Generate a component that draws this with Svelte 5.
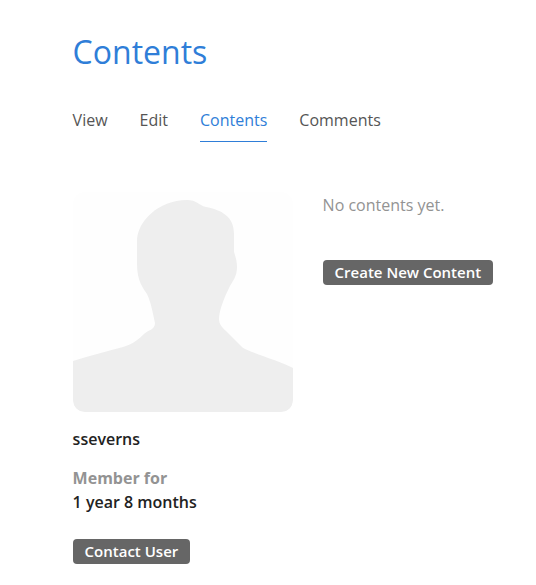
<script>
  let tabs = ['View', 'Edit', 'Contents', 'Comments']
  let active = 'Contents'
</script>

<main>
  <h1>Contents</h1>

  <nav>
    {#each tabs as tab}
      <a href="#{tab}" class:active={tab === active}>{tab}</a>
    {/each}
  </nav>

  <div class="columns">
    <aside>
      <svg class="avatar" viewBox="0 0 220 220" role="img" aria-label="Avatar">
        <path
          fill="#eeeeee"
          d="M0 169 C16 164 34 159 50 155 C60 152 66 147 71 142 C75 138 82 138 82 131 C80 122 78 110 74 102 C70 96 64 89 64 72 L64 49 C64 30 85 8 114 8 C124 8 125 13 133 15 C148 18 161 24 161 42 L161 60 C163 66 164 70 164 75 C164 85 159 90 157 94 C152 104 146 118 146 127 C146 133 150 136 154 140 L169 155 C175 160 205 168 220 176 L220 208 Q220 220 208 220 L12 220 Q0 220 0 208 Z"
        />
      </svg>
      <p class="name">sseverns</p>
      <p class="label">Member for</p>
      <p class="value">1 year 8 months</p>
      <a class="button" href="#contact">Contact User</a>
    </aside>

    <section>
      <p class="empty">No contents yet.</p>
      <a class="button" href="#create">Create New Content</a>
    </section>
  </div>
</main>

<style>
  :global(body) {
    background: #fff;
    font-family: "Open Sans", sans-serif;
  }

  main {
    padding: 30px 20px 0 72.6px;
  }

  h1 {
    margin: 0;
    font-size: 32px;
    line-height: 44px;
    font-weight: 400;
    color: #2f7ed8;
  }

  nav {
    display: flex;
    gap: 32px;
    margin-top: 26px;
  }

  nav a {
    padding: 8px 0 9px;
    font-size: 16px;
    line-height: 24px;
    color: #555;
    text-decoration: none;
    border-bottom: 1px solid transparent;
  }

  nav a.active {
    color: #2f7ed8;
    border-bottom-color: #2f7ed8;
  }

  .columns {
    display: flex;
    gap: 30px;
    margin-top: 50px;
  }

  aside {
    width: 220px;
    flex: none;
  }

  .avatar {
    display: block;
    width: 220px;
    height: 220px;
    background: #fefefe;
    border-radius: 12px;
  }

  p {
    margin: 0;
    font-size: 16px;
    line-height: 24px;
  }

  .name {
    margin-top: 15px;
    font-weight: 600;
    color: #222;
  }

  .label {
    margin-top: 15px;
    font-weight: 700;
    color: #939393;
  }

  .value {
    font-weight: 600;
    color: #222;
  }

  section {
    padding-top: 1px;
  }

  .empty {
    color: #939393;
  }

  .button {
    display: inline-block;
    padding: 0 12px;
    font-size: 15px;
    line-height: 25px;
    font-weight: 600;
    color: #fff;
    background: #666;
    border-radius: 4px;
    text-decoration: none;
    white-space: nowrap;
  }

  aside .button {
    margin-top: 25px;
  }

  section .button {
    margin-top: 43px;
  }
</style>
